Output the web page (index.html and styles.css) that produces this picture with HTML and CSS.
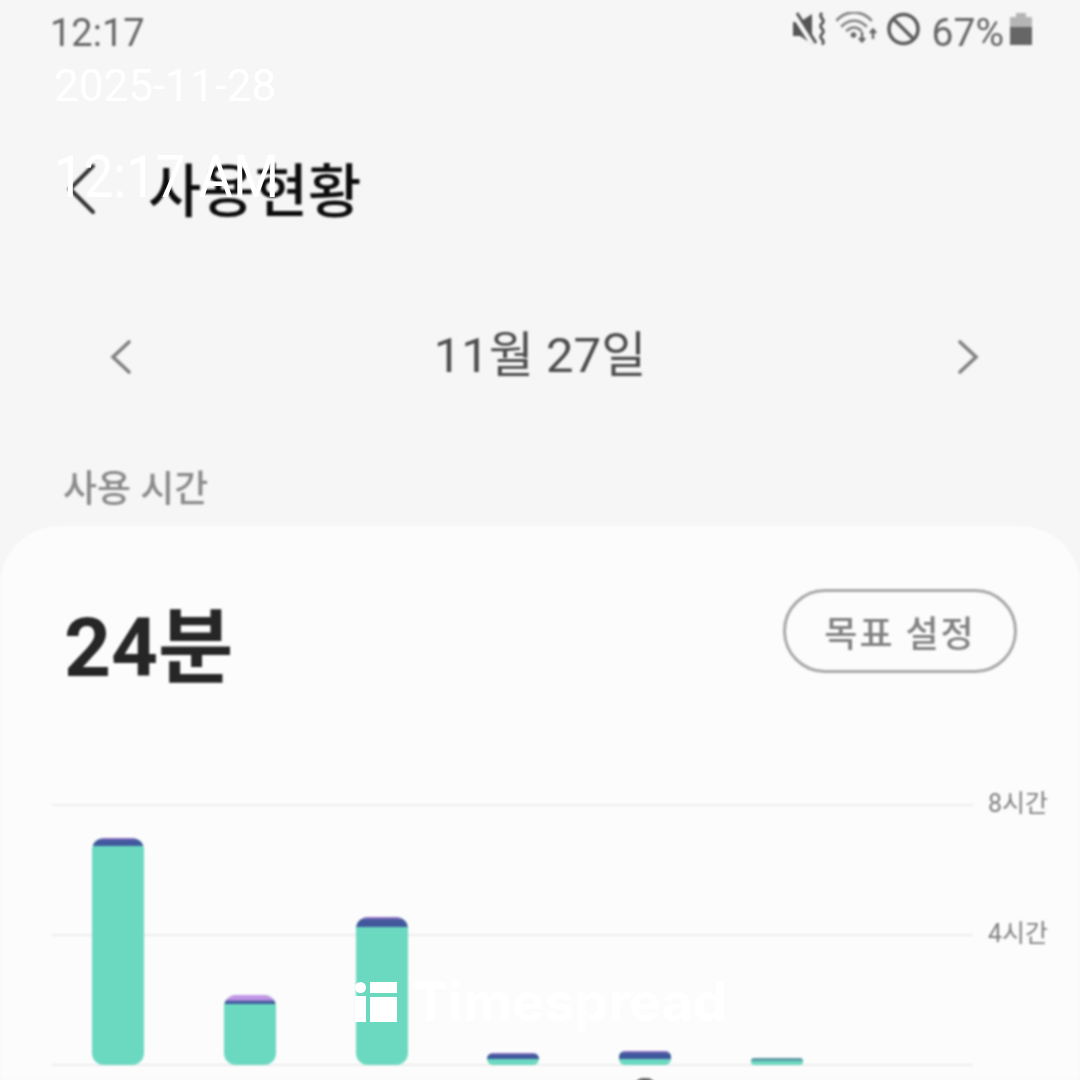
FILE: index.html
```html
<!DOCTYPE html>
<html lang="ko">
<head>
    <meta charset="UTF-8">
    <meta name="viewport" content="width=device-width, initial-scale=1.0">
    <title>사용 현황</title>
    <link rel="stylesheet" href="styles.css">
</head>

<body>
    <div class="screen">
        <div class="app">
            <div class="status-bar">
                <span class="clock">12:17</span>
                <div class="status-icons">
                    <svg class="icon-mute" width="34" height="34" viewBox="0 0 34 34">
                        <path d="M0 10h7l12-8v30l-12-8H0z" fill="#555"/>
                        <path d="M1 3l18 28" stroke="#f6f6f6" stroke-width="5"/>
                        <path d="M4 1l19 30" stroke="#555" stroke-width="3"/>
                        <path d="M29 1c-5 5 5 6 0 10.500s5 6 0 10.500 5 6 0 10.500" fill="none" stroke="#555" stroke-width="3"/>
                    </svg>
                    <svg class="icon-wifi" width="42" height="34" viewBox="0 0 42 34">
                        <path d="M1 8c10-10 24-10 34 0M6 14c7-7 17-7 24 0M11 18.500c4-4 10-4 14 0" fill="none" stroke="#808080" stroke-width="2.600" stroke-linecap="round"/>
                        <circle cx="17.500" cy="23" r="2.800" fill="#666"/>
                        <path d="M26 20v9M23 26l3 3.500 3-3.500M37 27v-9M34 21l3-3.500 3 3.500" fill="none" stroke="#666" stroke-width="2.400"/>
                    </svg>
                    <svg class="icon-block" width="33" height="34" viewBox="0 0 33 34">
                        <circle cx="16.500" cy="17" r="14.500" fill="none" stroke="#5c5c5c" stroke-width="3.600"/>
                        <path d="M6.500 7l20 20" stroke="#5c5c5c" stroke-width="3.600"/>
                    </svg>
                    <span class="battery-text">67%</span>
                    <div class="battery">
                        <div class="battery-cap"></div>
                        <div class="battery-empty"></div>
                        <div class="battery-fill"></div>
                    </div>
                </div>
            </div>

            <div class="title-bar">
                <svg width="34" height="54" viewBox="0 0 34 54">
                    <path d="M29 3L6 26l23 23" fill="none" stroke="#333" stroke-width="4" stroke-linecap="round"/>
                </svg>
                <h1>사용현황</h1>
            </div>

            <div class="date-row">
                <svg class="date-arrow" width="24" height="36" viewBox="0 0 24 36">
                    <path d="M20 3L4 18l16 15" fill="none" stroke="#808080" stroke-width="3.600" stroke-linecap="round"/>
                </svg>
                <span class="date">11월 27일</span>
                <svg class="date-arrow" width="24" height="36" viewBox="0 0 24 36">
                    <path d="M4 3l16 15L4 33" fill="none" stroke="#808080" stroke-width="3.600" stroke-linecap="round"/>
                </svg>
            </div>

            <div class="section-label">사용 시간</div>

            <div class="card">
                <div class="card-head">
                    <div class="total">24분</div>
                    <button class="goal-button">목표 설정</button>
                </div>

                <div class="chart">
                    <div class="grid-lines">
                        <div class="grid-row"><span>8시간</span></div>
                        <div class="grid-row"><span>4시간</span></div>
                        <div class="grid-row"><span></span></div>
                    </div>
                    <div class="bars">
                        <div class="bar" style="height: 227px"><div class="bar-top dark" style="height: 8px"></div></div>
                        <div class="bar" style="height: 70px"><div class="bar-top purple" style="height: 9px"></div></div>
                        <div class="bar" style="height: 148px"><div class="bar-top dark" style="height: 10px"></div></div>
                        <div class="bar small" style="height: 12px"><div class="bar-top dark" style="height: 6px"></div></div>
                        <div class="bar small" style="height: 14px"><div class="bar-top dark" style="height: 8px"></div></div>
                        <div class="bar small" style="height: 7px"><div class="bar-top grey" style="height: 3px"></div></div>
                    </div>
                    <div class="today-mark"></div>
                </div>
            </div>
        </div>

        <div class="stamp-date">2025-11-28</div>
        <div class="stamp-time">12:17 AM</div>
        <div class="watermark">
            <svg width="42" height="40" viewBox="0 0 42 40">
                <circle cx="5.500" cy="5.500" r="5.500" fill="#fff"/>
                <path d="M0 14h11v26H0zM15 0h27v11H15zM15 15h27v25H15z" fill="#fff"/>
            </svg>
            <span>Timespread</span>
        </div>
    </div>
</body>
</html>
```

FILE: styles.css
```css
* {
    box-sizing: border-box;
}

body {
    margin: 0;
    background-color: #f6f6f6;
    font-family: Roboto, "Noto Sans CJK KR", sans-serif;
}

.screen {
    position: relative;
    width: 1080px;
    height: 1080px;
    overflow: hidden;
}

/* the screenshot is an upscaled capture, only the stamps on top are sharp */
.app {
    height: 1080px;
    filter: blur(0.9px);
}

.status-bar {
    display: flex;
    justify-content: space-between;
    align-items: center;
    height: 62px;
    padding: 3px 48px 0 50px;
    color: #666;
    font-size: 38px;
}

.status-icons {
    display: flex;
    align-items: center;
}

.status-icons svg, .battery {
    margin-bottom: 7px;
}

.icon-wifi {
    margin-left: 9px;
}

.icon-block {
    margin-left: 9px;
}

.battery-text {
    margin-left: 12px;
    font-size: 39px;
}

.battery {
    display: flex;
    flex-direction: column;
    align-items: center;
    width: 22px;
    margin-left: 6px;
}

.battery-cap {
    width: 10px;
    height: 4px;
    background-color: #b5b5b5;
}

.battery-empty {
    width: 100%;
    height: 10px;
    background-color: #b5b5b5;
}

.battery-fill {
    width: 100%;
    height: 18px;
    background-color: #666;
}

.title-bar {
    display: flex;
    align-items: center;
    gap: 50px;
    height: 100px;
    margin-top: 78px;
    padding-left: 64px;
}

.title-bar h1 {
    margin: 4px 0 0;
    color: #0c0c0c;
    font-size: 58px;
    font-weight: 500;
    line-height: 1;
}

.date-row {
    display: flex;
    justify-content: space-between;
    align-items: center;
    height: 60px;
    margin-top: 83px;
    padding: 0 100px 0 109px;
}

.date-arrow {
    margin-top: 8px;
}

.date {
    margin-right: 9px;
    margin-bottom: 6px;
    color: #4c4c4c;
    font-size: 49px;
}

.section-label {
    height: 50px;
    margin-top: 80px;
    padding-left: 63px;
    color: #8a8a8a;
    font-size: 37px;
    font-weight: 500;
    line-height: 54px;
}

.card {
    height: 554px;
    margin-top: 13px;
    padding-top: 63px;
    background-color: #fcfcfc;
    border-radius: 60px 60px 0 0;
}

.card-head {
    display: flex;
    justify-content: space-between;
    align-items: flex-start;
    height: 151px;
    padding: 0 63px 0 64px;
}

.total {
    color: #262626;
    font-size: 82px;
    font-weight: 700;
    line-height: 118px;
}

.goal-button {
    width: 234px;
    height: 84px;
    padding: 0;
    background: none;
    border: 3px solid #a8a8a8;
    border-radius: 42px;
    color: #808080;
    font-family: inherit;
    font-size: 36px;
    font-weight: 500;
    letter-spacing: 2px;
}

.chart {
    display: grid;
}

.grid-lines, .bars, .today-mark {
    grid-area: 1 / 1;
}

.grid-row {
    display: flex;
    align-items: center;
    height: 130px;
    margin-left: 52px;
}

.grid-row::before {
    content: "";
    width: 921px;
    height: 2px;
    background-color: #eeeeee;
}

.grid-row span {
    margin-bottom: 8px;
    margin-left: 15px;
    color: #808080;
    font-size: 25px;
}

.bars {
    display: flex;
    align-items: flex-end;
    gap: 79.800px;
    height: 325px;
    padding-left: 92px;
}

.bar {
    width: 52px;
    overflow: hidden;
    background-color: #6bd9c0;
    border-radius: 12px;
}

.bar.small {
    border-radius: 6px;
}

.bar-top.dark {
    background: linear-gradient(#8f72c4 12%, #42589c 30%);
}

.bar-top.purple {
    background: linear-gradient(#c295e6 50%, #42589c 75%);
}

.bar-top.grey {
    background-color: #5b9aa4;
}

.today-mark {
    width: 20px;
    height: 8px;
    margin-top: 338px;
    margin-left: 635px;
    background-color: #666;
    border-radius: 10px 10px 0 0;
}

.stamp-date, .stamp-time, .watermark {
    position: absolute;
    color: #fff;
    font-family: Roboto, sans-serif;
}

.stamp-date {
    top: 60px;
    left: 54px;
    font-size: 44px;
}

.stamp-time {
    top: 141px;
    left: 54px;
    font-size: 60px;
    transform: scaleX(0.88);
    transform-origin: left;
}

.watermark {
    top: 982px;
    left: 355px;
    display: flex;
    align-items: center;
    gap: 15px;
    font-family: Inter, sans-serif;
    font-size: 54px;
    font-weight: 700;
    line-height: 40px;
}
```
